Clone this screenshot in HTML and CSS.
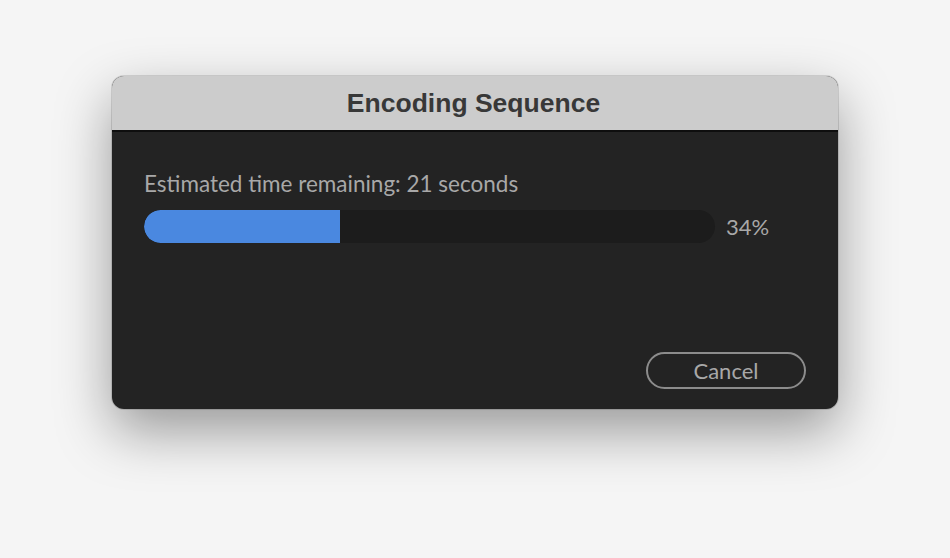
FILE: index.html
```html
<!DOCTYPE html>
<html>
<head>
<meta charset="utf-8">
<link rel="stylesheet" href="styles.css">
</head>
<body>
<div class="dialog">
  <div class="titlebar">Encoding Sequence</div>
  <div class="content">
    <div class="status">Estimated time remaining: 21 seconds</div>
    <div class="progress-row">
      <div class="track"><div class="fill" style="width:34.3%"></div></div>
      <div class="percent">34%</div>
    </div>
    <div class="actions">
      <button class="cancel">Cancel</button>
    </div>
  </div>
</div>
</body>
</html>
```
FILE: styles.css
```css
html, body {
  margin: 0;
  padding: 0;
}
body {
  width: 950px;
  height: 558px;
  background: #f5f5f5;
  padding: 76px 0 0 112px;
  box-sizing: border-box;
  overflow: hidden;
}
.dialog {
  width: 726px;
  height: 333px;
  border-radius: 12px;
  overflow: hidden;
  background: #232323;
  box-shadow: 0 22px 55px rgba(0,0,0,0.38), 0 0 0 1px rgba(0,0,0,0.12);
  display: flex;
  flex-direction: column;
}
.titlebar {
  height: 54px;
  background: #cccccc;
  border-bottom: 2px solid #0e0e0e;
  display: flex;
  align-items: center;
  justify-content: center;
  font-family: "Liberation Sans", Arial, sans-serif;
  font-weight: bold;
  font-size: 26.5px;
  color: #383838;
  padding-right: 3px;
}
.content {
  flex: 1;
  padding: 38px 32px 20px 32px;
  display: flex;
  flex-direction: column;
  font-family: Lato, "Open Sans", sans-serif;
  color: #a8a8a8;
}
.status {
  font-size: 22.5px;
  line-height: 28px;
  height: 28px;
}
.progress-row {
  margin-top: 12px;
  display: flex;
  align-items: center;
}
.track {
  width: 571px;
  height: 33px;
  border-radius: 17px;
  background: #1c1c1c;
  overflow: hidden;
}
.fill {
  height: 100%;
  background: #4a88e0;
  border-radius: 17px 0 0 17px;
}
.percent {
  margin-left: 11px;
  font-size: 22px;
}
.actions {
  margin-top: auto;
  display: flex;
  justify-content: flex-end;
}
.cancel {
  width: 160px;
  height: 37px;
  border: 2px solid #8c8c8c;
  border-radius: 19px;
  background: transparent;
  color: #a8a8a8;
  font-family: Lato, "Open Sans", sans-serif;
  font-size: 22px;
  padding: 0;
  box-sizing: border-box;
}
```
